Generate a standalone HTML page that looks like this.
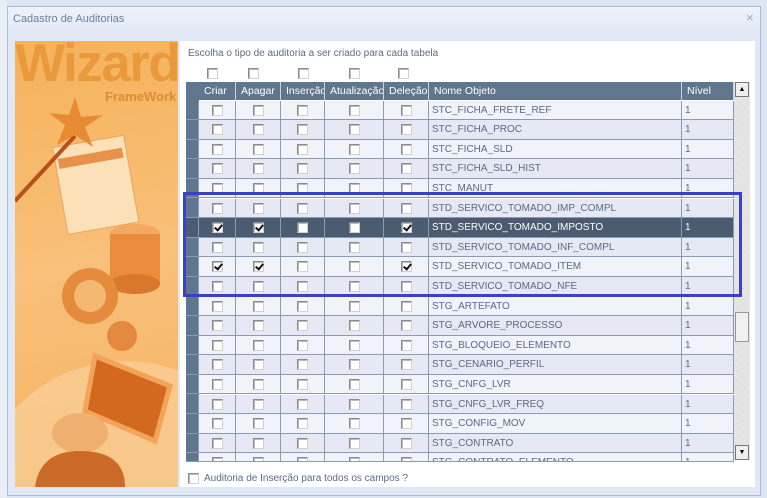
<!DOCTYPE html>
<html><head><meta charset="utf-8"><style>
*{margin:0;padding:0;box-sizing:border-box}
body{width:767px;height:498px;overflow:hidden;background:#dce6f2;font-family:"Liberation Sans",sans-serif;position:relative}
.a{position:absolute}
.dlg{left:7px;top:6px;width:754px;height:490px;background:#dfe8f4;border:1px solid #a9bcd6}
.title{left:8px;top:7px;width:752px;height:24px;background:linear-gradient(#eef3fa,#e2eaf5);color:#6d7f99;font-size:11px;padding:6px 0 0 5px}
.cb{position:absolute;width:11px;height:11px;border:1px solid #8a8a8a;border-right-color:#d0d0d0;border-bottom-color:#d0d0d0;background:#fff;box-shadow:inset 1px 1px 0 #bbb}
.hd{position:absolute;top:82px;height:18px;background:#60768f;color:#fff;font-size:10.5px;line-height:18px;padding-left:5px;border-right:1px solid #c9d2e0;overflow:hidden;white-space:nowrap}
.row{position:absolute;left:186px;width:548px;border-bottom:1px solid #8b9bb4}
.cell{position:absolute;top:0;bottom:0;border-right:1px solid #8b9bb4;font-size:10px;color:#5a6a84;line-height:19px;padding-left:3px;white-space:nowrap;overflow:hidden}
.chk::after{content:"";position:absolute;left:3px;top:0px;width:3px;height:6px;border:solid #111;border-width:0 2px 2px 0;transform:rotate(40deg)}
</style></head><body>
<div class="a" style="left:0;top:0;width:7px;height:498px;background:#e9eef5"></div>
<div class="a dlg"></div>
<div class="a title">Cadastro de Auditorias</div>
<div class="a" style="left:746px;top:10px;color:#a0a8b4;font-size:13px">×</div>
<div class="a" style="left:15px;top:41px;width:163px;height:446px;overflow:hidden;background:linear-gradient(170deg,#f6b25a 0%,#f8c07a 50%,#f6b262 100%)">
<div class="a" style="left:-40px;top:320px;width:300px;height:300px;border-radius:50%;background:#f9cd95;opacity:.8"></div>
<div class="a" style="left:0;top:-8px;font-weight:bold;font-size:53px;color:#e89a3c;letter-spacing:-1.5px">Wizard</div>
<div class="a" style="left:90px;top:48px;font-weight:bold;font-size:13px;color:#dd8c3a">FrameWork</div>
<svg class="a" style="left:0;top:0" width="163" height="446">
<rect x="45" y="100" width="72" height="88" fill="#fbe0b8" stroke="#e9a560" transform="rotate(-10 80 145)"/>
<rect x="48" y="112" width="65" height="10" fill="#e6924a" transform="rotate(-10 80 145)"/>
<line x1="0" y1="160" x2="60" y2="95" stroke="#b8501c" stroke-width="4"/>
<polygon points="60,56 66,76 88,74 70,86 78,106 60,94 42,104 50,84 34,72 54,74" fill="#e88a34"/>
<ellipse cx="120" cy="193" rx="25" ry="10" fill="#f4a860"/>
<rect x="95" y="193" width="50" height="50" fill="#e98d3c"/>
<ellipse cx="120" cy="243" rx="25" ry="10" fill="#d9782c"/>
<circle cx="75" cy="255" r="28" fill="#e68a3c"/><circle cx="75" cy="255" r="16" fill="#f5b873"/>
<circle cx="107" cy="295" r="15" fill="#e38a40"/>
<polygon points="80,315 155,345 140,400 70,370" fill="#d2691e" stroke="#f2a45a" stroke-width="5"/>
<ellipse cx="65" cy="392" rx="28" ry="20" fill="#f0b070"/>
<path d="M20 446 Q25 410 65 410 Q110 410 110 446Z" fill="#cc6a28"/>
</svg>
</div>
<div class="a" style="left:180px;top:41px;width:575px;height:446px;background:#fff"></div>
<div class="a" style="left:188px;top:48px;font-size:10px;color:#5b6b85">Escolha o tipo de auditoria a ser criado para cada tabela</div>
<div class="cb" style="left:207px;top:68px"></div>
<div class="cb" style="left:248px;top:68px"></div>
<div class="cb" style="left:298px;top:68px"></div>
<div class="cb" style="left:349px;top:68px"></div>
<div class="cb" style="left:398px;top:68px"></div>
<div class="a" style="left:186px;top:82px;width:13px;height:378px;background:#60768f"></div>
<div class="hd" style="left:199px;width:37px">Criar</div>
<div class="hd" style="left:236px;width:45px">Apagar</div>
<div class="hd" style="left:281px;width:44px">Inserção</div>
<div class="hd" style="left:325px;width:59px">Atualização</div>
<div class="hd" style="left:384px;width:45px">Deleção</div>
<div class="hd" style="left:429px;width:253px">Nome Objeto</div>
<div class="hd" style="left:682px;width:52px">Nível</div>
<div id="rows"></div>
<div class="a" style="left:734px;top:82px;width:16px;height:378px;background:#e4e4e4;background-image:repeating-linear-gradient(45deg,#ececec 0 1px,#dcdcdc 1px 2px)"></div>
<div class="a" style="left:735px;top:82px;width:14px;height:15px;background:#eee;border:1px solid #777;font-size:7px;text-align:center;line-height:13px">▲</div>
<div class="a" style="left:735px;top:312px;width:14px;height:30px;background:#f0f0f0;border:1px solid #999"></div>
<div class="a" style="left:735px;top:445px;width:14px;height:15px;background:#eee;border:1px solid #777;font-size:7px;text-align:center;line-height:13px">▼</div>
<div class="cb" style="left:188px;top:473px"></div>
<div class="a" style="left:204px;top:473px;font-size:10px;color:#5b6b85">Auditoria de Inserção para todos os campos ?</div>
<div class="a" style="left:183px;top:192px;width:559px;height:105px;border:3px solid #3b40c4"></div>
<script>
var n=["STC_FICHA_FRETE_REF","STC_FICHA_PROC","STC_FICHA_SLD","STC_FICHA_SLD_HIST","STC_MANUT","STD_SERVICO_TOMADO_IMP_COMPL","STD_SERVICO_TOMADO_IMPOSTO","STD_SERVICO_TOMADO_INF_COMPL","STD_SERVICO_TOMADO_ITEM","STD_SERVICO_TOMADO_NFE","STG_ARTEFATO","STG_ARVORE_PROCESSO","STG_BLOQUEIO_ELEMENTO","STG_CENARIO_PERFIL","STG_CNFG_LVR","STG_CNFG_LVR_FREQ","STG_CONFIG_MOV","STG_CONTRATO","STG_CONTRATO_ELEMENTO"];
var cols=[[13,37],[50,45],[95,44],[139,59],[198,45]],h="";
for(var i=0;i<n.length;i++){var t=100.5+i*19.6,hh=(i==18)?9:19.6,sel=i==6,bg=sel?"#4b5b72":(i%2?"#e6e9f3":"#f0f3fa");
var chk=(i==6||i==8)?[1,1,0,0,1]:[0,0,0,0,0];
h+='<div class="row" style="top:'+t+'px;height:'+hh+'px;background:'+bg+';overflow:hidden"><div class="cell" style="left:0;width:13px;background:'+(sel?'#4b5b72':'#60768f')+'"></div>';
for(var c=0;c<5;c++){h+='<div class="cell" style="left:'+cols[c][0]+'px;width:'+cols[c][1]+'px"><div class="cb'+(chk[c]?' chk':'')+'" style="left:'+(cols[c][1]/2-6)+'px;top:4px"></div></div>';}
var tc=sel?"#fff":"#5a6a84";
h+='<div class="cell" style="left:243px;width:253px;color:'+tc+'">'+n[i]+'</div><div class="cell" style="left:496px;width:52px;color:'+tc+'">1</div></div>';}
document.getElementById("rows").innerHTML=h;
</script>
</body></html>
